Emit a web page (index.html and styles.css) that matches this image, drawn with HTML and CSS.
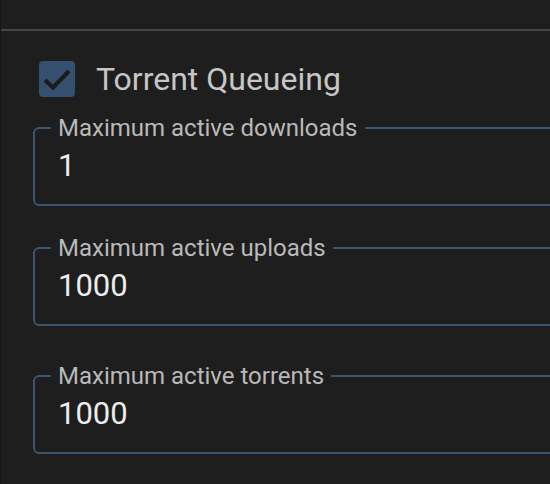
FILE: index.html
```html
<!DOCTYPE html>
<html>
<head>
<meta charset="utf-8">
<link rel="stylesheet" href="styles.css">
</head>
<body>
<div class="page">
  <div class="topbar"></div>
  <div class="divider"></div>
  <section class="section">
    <label class="check-row">
      <span class="checkbox">
        <svg width="36" height="36" viewBox="0 0 36 36"><polyline points="6,19 14,26.5 30,10" fill="none" stroke="#1c1c1c" stroke-width="4.2" stroke-linecap="butt" stroke-linejoin="miter"/></svg>
      </span>
      <span class="check-label">Torrent Queueing</span>
    </label>
    <fieldset class="field field-1">
      <legend>Maximum active downloads</legend>
      <div class="value">1</div>
    </fieldset>
    <fieldset class="field field-2">
      <legend>Maximum active uploads</legend>
      <div class="value">1000</div>
    </fieldset>
    <fieldset class="field field-3">
      <legend>Maximum active torrents</legend>
      <div class="value">1000</div>
    </fieldset>
  </section>
</div>
</body>
</html>
```
FILE: styles.css
```css
html, body {
  margin: 0;
  padding: 0;
  background: #1e1e1e;
}
.page {
  width: 550px;
  height: 484px;
  overflow: hidden;
  font-family: Roboto, "Noto Sans", sans-serif;
  border-left: 1px solid #171717;
  box-sizing: border-box;
}
.topbar {
  height: 29px;
}
.divider {
  height: 2px;
  background: #454545;
}
.section {
  padding-left: 32px;
}
.check-row {
  display: flex;
  align-items: center;
  margin-top: 30px;
  margin-left: 6px;
  height: 36px;
}
.checkbox {
  width: 36px;
  height: 36px;
  border-radius: 4px;
  background: #35506f;
  display: flex;
}
.check-label {
  margin-left: 21px;
  font-size: 32px;
  color: #c6c6c6;
  line-height: 36px;
}
.field {
  margin: 0 -40px 0 0;
  border: 2px solid #3a536f;
  border-radius: 6px;
  padding: 0 22px 20px 23px;
  min-width: 0;
}
.field-1 { margin-top: 17px; }
.field-2 { margin-top: 28px; }
.field-3 { margin-top: 36px; }
.field legend {
  padding: 0 7px;
  margin-left: -7px;
  font-size: 24px;
  line-height: 28px;
  color: #b9b9b9;
}
.value {
  margin-top: 6px;
  font-size: 31px;
  line-height: 36px;
  color: #ececec;
}
```
